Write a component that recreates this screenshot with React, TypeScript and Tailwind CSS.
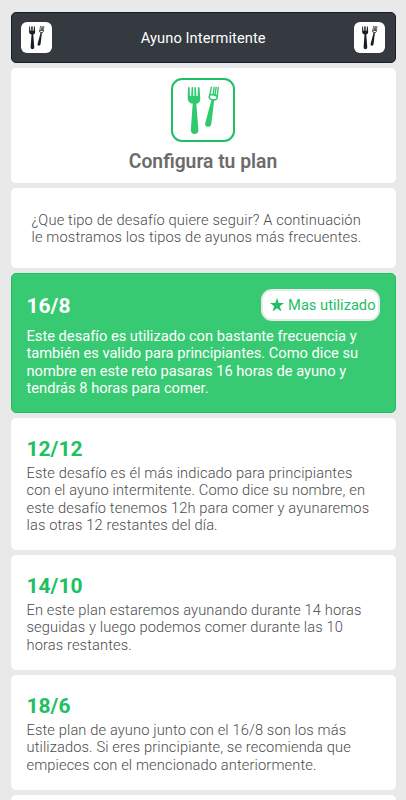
import React from 'react';

type Plan = {
  name: string;
  lines: string[];
  height: string;
};

const plans: Plan[] = [
  {
    name: '12/12',
    lines: [
      'Este desafío es él más indicado para principiantes',
      'con el ayuno intermitente. Como dice su nombre, en',
      'este desafío tenemos 12h para comer y ayunaremos',
      'las otras 12 restantes del día.',
    ],
    height: 'h-[132px]',
  },
  {
    name: '14/10',
    lines: [
      'En este plan estaremos ayunando durante 14 horas',
      'seguidas y luego podemos comer durante las 10',
      'horas restantes.',
    ],
    height: 'h-[115px]',
  },
  {
    name: '18/6',
    lines: [
      'Este plan de ayuno junto con el 16/8 son los más',
      'utilizados. Si eres principiante, se recomienda que',
      'empieces con el mencionado anteriormente.',
    ],
    height: 'h-[115px]',
  },
];

const Forks = ({ className }: { className: string }) => (
  <svg viewBox="0 0 64 64" className={className} fill="currentColor">
    <path d="M17 9.4Q17.8 8.4 18.6 9.4L18.9 18H20.2L20.6 9.4Q21.4 8.4 22.2 9.4V18H23.4V9.4Q24.2 8.4 25 9.4L25.3 18H26.6L26.9 9.4Q27.7 8.4 28.5 9.4L29.3 20.5Q29.3 25 25.3 25.8L27.4 52Q27.2 56 23.6 56Q20 56 19.8 52L21.7 25.8Q17 25 16.7 20.5Z" />
    <path d="M40.4 9.2L38.8 17M43.2 9.2L42 17M45.2 9.4L43.8 17.4M47.3 9.4L46.3 17.6" fill="none" stroke="currentColor" strokeWidth="1.4" strokeLinecap="round" />
    <ellipse cx="42.2" cy="19.2" rx="4" ry="2.6" transform="rotate(8 42.2 19.2)" fill="none" stroke="currentColor" strokeWidth="1.6" />
    <path d="M40.6 21.6L43.2 22L40.3 46Q39.7 49 36.8 48.8Q33.7 48.4 34.2 45.2Z" />
  </svg>
);

const HeaderButton = () => (
  <button className="flex size-[31px] items-center justify-center rounded-[6px] bg-white text-[#171e28]">
    <Forks className="size-[31px]" />
  </button>
);

const Description = ({ lines, className }: { lines: string[]; className: string }) => (
  <p className={`whitespace-nowrap text-[14.67px] leading-[17.33px] ${className}`}>
    {lines.map((line) => (
      <span key={line} className="block">{line}</span>
    ))}
  </p>
);

const PlanCard = ({ plan }: { plan: Plan }) => (
  <section className={`shrink-0 rounded-[5px] bg-white px-[16px] pt-[19px] ${plan.height}`}>
    <h2 className="text-[21px] font-bold leading-[25px] text-[#1dc063]">{plan.name}</h2>
    <Description lines={plan.lines} className="mt-[3px] font-light tracking-[0.12px] text-[#4c4c4c]" />
  </section>
);

const App = () => {
  return (
    <main className="flex h-[800px] w-[406px] flex-col gap-[5px] overflow-hidden bg-[#e9e9e9] px-[10.5px] pt-[12px] font-[Roboto,sans-serif]">
      <header className="flex h-[51px] shrink-0 items-center justify-between rounded-[5px] border border-[#171e28] bg-[#343a40] pl-[9.5px] pr-[9px]">
        <HeaderButton />
        <h1 className="text-[14.67px] tracking-[0.07px] text-white">Ayuno Intermitente</h1>
        <HeaderButton />
      </header>

      <section className="flex h-[115px] shrink-0 flex-col items-center rounded-[5px] bg-white pt-[10px]">
        <div className="size-[64px] rounded-[11px] border-2 border-[#1dc063] text-[#2fc970]">
          <Forks className="-m-[2px] size-[64px]" />
        </div>
        <h2 className="mt-[8px] text-[19.3px] font-semibold leading-[24px] text-[#6b6b6b]">Configura tu plan</h2>
      </section>

      <section className="h-[80px] shrink-0 rounded-[5px] bg-white px-[21px] pt-[24px]">
        <Description
          lines={[
            '¿Que tipo de desafío quiere seguir? A continuación',
            'le mostramos los tipos de ayunos más frecuentes.',
          ]}
          className="font-light tracking-[0.14px] text-[#4c4c4c]"
        />
      </section>

      <section className="h-[140px] shrink-0 rounded-[5px] border border-[#1dc063] bg-[#38ca73] px-[15px] pt-[14px] text-white">
        <div className="flex h-[33px] items-center justify-between">
          <h2 className="mt-[3px] text-[21px] font-bold leading-[25px]">16/8</h2>
          <div className="flex h-[32px] w-[119px] items-center justify-between rounded-[11px] border-2 border-[#e9e9e9] bg-white pl-[7px] pr-[2px] text-[#1dc063]">
            <svg viewBox="0 0 24 24" className="size-[14px]" fill="currentColor">
              <path d="M12 0L14.9 8.5H24L16.8 14L19.5 23L12 17.5L4.5 23L7.2 14L0 8.5H9.1Z" />
            </svg>
            <span className="whitespace-nowrap text-[14.67px]">Mas utilizado</span>
          </div>
        </div>
        <Description
          lines={[
            'Este desafío es utilizado con bastante frecuencia y',
            'también es valido para principiantes. Como dice su',
            'nombre en este reto pasaras 16 horas de ayuno y',
            'tendrás 8 horas para comer.',
          ]}
          className="mt-[7px]"
        />
      </section>

      {plans.map((plan) => (
        <PlanCard key={plan.name} plan={plan} />
      ))}

      <section className="h-[115px] shrink-0 rounded-[5px] bg-white" />
    </main>
  );
};

export default App;
